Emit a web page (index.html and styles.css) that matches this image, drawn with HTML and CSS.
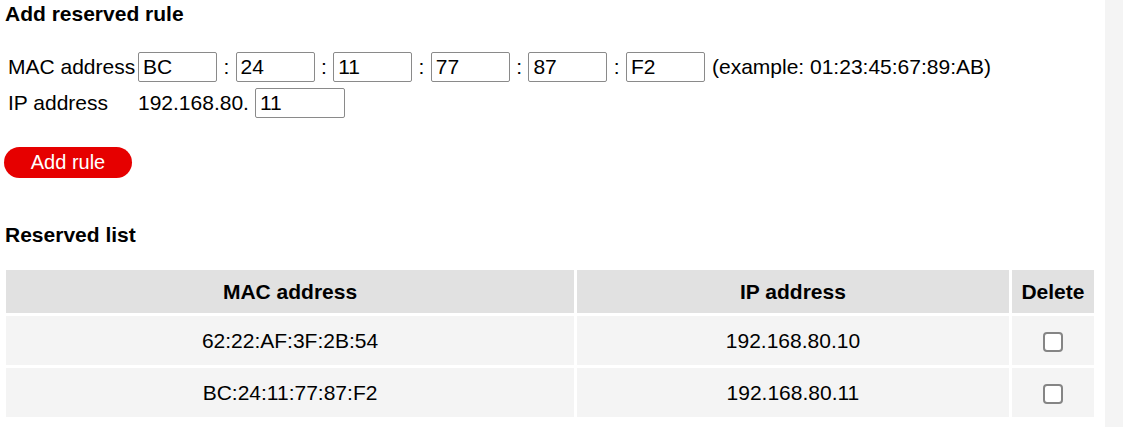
FILE: index.html
```
<!DOCTYPE html>
<html>
<head>
<title>DHCP reservation</title>
<meta name=viewport content="width=device-width, initial-scale=1">
<link rel="stylesheet" href="styles.css">
</head>
<body>
<div class="layout">
<div class="main">
<div class="title">Add reserved rule</div>
<div class="row">
	<span class="label">MAC address</span>
	<input class="mac" type="text" value="BC"><span class="sep">:</span>
	<input class="mac" type="text" value="24"><span class="sep">:</span>
	<input class="mac" type="text" value="11"><span class="sep">:</span>
	<input class="mac" type="text" value="77"><span class="sep">:</span>
	<input class="mac" type="text" value="87"><span class="sep">:</span>
	<input class="mac" type="text" value="F2">
	<span class="hint">(example: 01:23:45:67:89:AB)</span>
</div>
<div class="row">
	<span class="label">IP address</span>
	<span class="prefix">192.168.80.</span>
	<input class="ip" type="text" value="11">
</div>
<button class="redbtn">Add rule</button>
<div class="title list">Reserved list</div>
<table class="rlist">
<tr><th class="c1">MAC address</th><th class="c2">IP address</th><th class="c3">Delete</th></tr>
<tr><td>62:22:AF:3F:2B:54</td><td>192.168.80.10</td><td><input class="chk" type="checkbox"></td></tr>
<tr><td>BC:24:11:77:87:F2</td><td>192.168.80.11</td><td><input class="chk" type="checkbox"></td></tr>
</table>
</div>
<div class="strip"></div>
</div>
</body>
</html>
```
FILE: styles.css
```
body {
    margin: 0;
    background-color: white;
    font-family: "Liberation Sans", Arial, sans-serif;
    font-size: 21px;
    color: black;
}
.layout {
    display: flex;
    height: 427px;
}
.main {
    flex: 1;
    padding-left: 5px;
}
.strip {
    width: 18px;
    background-color: #f4f4f4;
}
.title {
    font-weight: bold;
    font-size: 21px;
    padding-top: 2px;
    height: 47px;
}
.row {
    display: flex;
    align-items: center;
    height: 36px;
    padding-left: 3px;
}
.label {
    width: 130px;
    min-width: 0;
    white-space: nowrap;
}
.mac, .ip {
    font-family: "Liberation Sans", Arial, sans-serif;
    font-size: 21px;
    width: 79px;
    height: 30px;
    box-sizing: border-box;
    border: 1px solid #8a8a8a;
    border-radius: 2px;
    padding: 0 4px;
    margin: 0;
}
.sep {
    width: 18.6px;
    text-align: center;
}
.hint {
    margin-left: 7px;
}
.prefix {
    margin-right: 6px;
}
.ip {
    width: 90px;
}
.redbtn {
    display: block;
    margin-top: 26px;
    margin-left: -1px;
    width: 128px;
    height: 31px;
    background-color: #e60000;
    color: white;
    border: none;
    border-radius: 16px;
    font-family: "Liberation Sans", Arial, sans-serif;
    font-size: 20px;
    padding: 0;
    cursor: pointer;
}
.title.list {
    margin-top: 43px;
    height: 44px;
}
.rlist {
    border-spacing: 3px;
    width: 1094px;
    margin-left: -2px;
}
.rlist th {
    background-color: #e1e1e1;
    height: 43px;
    font-weight: bold;
    padding: 0;
}
.rlist td {
    background-color: #f4f4f4;
    height: 49px;
    text-align: center;
    padding: 0;
}
.c1 { width: 567px; }
.c2 { width: 431px; }
.c3 { width: 82px; }
.chk {
    appearance: none;
    -webkit-appearance: none;
    box-sizing: border-box;
    width: 20px;
    height: 20px;
    margin: 0;
    border: 2px solid #858585;
    border-radius: 4px;
    background-color: white;
    vertical-align: middle;
}
```
